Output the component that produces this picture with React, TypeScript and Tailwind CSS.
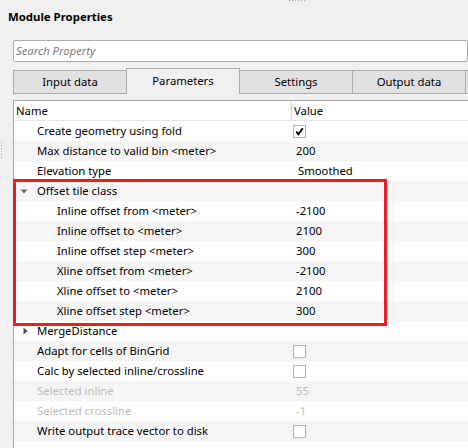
import React from "react";

type Row = {
  label: string;
  value?: string;
  level: 0 | 1;
  kind?: "text" | "check" | "checked" | "open" | "closed";
  disabled?: boolean;
  pad?: boolean;
};

const rows: Row[] = [
  { label: "Create geometry using fold", level: 0, kind: "checked" },
  { label: "Max distance to valid bin <meter>", value: "200", level: 0 },
  { label: "Elevation type", value: "Smoothed", level: 0, pad: true },
  { label: "Offset tile class", level: 0, kind: "open" },
  { label: "Inline offset from <meter>", value: "-2100", level: 1 },
  { label: "Inline offset to <meter>", value: "2100", level: 1 },
  { label: "Inline offset step <meter>", value: "300", level: 1 },
  { label: "Xline offset from <meter>", value: "-2100", level: 1 },
  { label: "Xline offset to <meter>", value: "2100", level: 1 },
  { label: "Xline offset step <meter>", value: "300", level: 1 },
  { label: "MergeDistance", level: 0, kind: "closed" },
  { label: "Adapt for cells of BinGrid", level: 0, kind: "check" },
  { label: "Calc by selected inline/crossline", level: 0, kind: "check" },
  { label: "Selected inline", value: "55", level: 0, disabled: true },
  { label: "Selected crossline", value: "-1", level: 0, disabled: true },
  { label: "Write output trace vector to disk", level: 0, kind: "check" },
];

const tabs = ["Input data", "Parameters", "Settings", "Output data", ""];

function CheckBox({ checked }: { checked?: boolean }) {
  return (
    <div className="flex h-[13px] w-[13px] items-center justify-center border border-[#b4b4b4] bg-white">
      {checked && (
        <svg width="11" height="11" viewBox="0 0 11 11">
          <path d="M2.2 5.6 L4.4 8.3 L8.8 2.2" fill="none" stroke="#000" strokeWidth="1.9" />
        </svg>
      )}
    </div>
  );
}

function PropRow({ row, index }: { row: Row; index: number }) {
  const kind = row.kind || "text";
  return (
    <div className={`flex h-[20px] items-center ${index % 2 === 1 ? "bg-[#f5f5f5]" : "bg-white"}`}>
      <div className="flex w-[278px] shrink-0 items-center">
        <div className={`flex shrink-0 items-center justify-center ${row.level === 1 ? "w-[43px]" : "w-[23px]"}`}>
          {kind === "open" && (
            <svg width="8" height="5" viewBox="0 0 8 5" className="mr-[3px]">
              <path d="M0.5 0.5 L7.5 0.5 L4 4.5 Z" fill="#6e6e6e" />
            </svg>
          )}
          {kind === "closed" && (
            <svg width="5" height="8" viewBox="0 0 5 8" className="mr-[1px]">
              <path d="M0.5 0.5 L4.5 4 L0.5 7.5 Z" fill="#4a4a4a" />
            </svg>
          )}
        </div>
        <span className={`whitespace-nowrap ${row.disabled ? "text-[#bdbdbd]" : "text-black"}`}>{row.label}</span>
      </div>
      <div className="flex items-center">
        {kind === "checked" && <div className="pl-[1px]"><CheckBox checked /></div>}
        {kind === "check" && <div className="pl-[1px]"><CheckBox /></div>}
        {row.value && (
          <span className={`${row.pad ? "pl-[6px]" : "pl-[4px]"} ${row.disabled ? "text-[#bdbdbd]" : "text-black"}`}>
            {row.value}
          </span>
        )}
      </div>
    </div>
  );
}

export default function App() {
  return (
    <div className="relative h-[448px] w-[468px] overflow-hidden bg-[#f0f0f0] font-['Noto_Sans',sans-serif] text-[11.3px] leading-[20px] text-black">
      {/* splitter grips */}
      <div className="absolute left-[289px] top-0 flex gap-[2px]">
        {[0, 1, 2, 3, 4, 5].map((i) => (
          <div key={i} className="h-px w-px bg-[#a8a8a8]" />
        ))}
      </div>
      <div className="absolute left-[1px] top-[142px] flex flex-col gap-[2px]">
        {[0, 1, 2, 3, 4, 5].map((i) => (
          <div key={i} className="h-px w-px bg-[#a8a8a8]" />
        ))}
      </div>

      <div className="h-[40px] px-2 pt-[9px]">
        <div className="text-[11.4px] font-bold leading-[16px]">Module Properties</div>
      </div>

      <div className="ml-[13px] flex h-[22px] items-center rounded-[2px] border border-[#acacac] bg-white pl-[2px]">
        <span className="italic text-[#7c7c7c]">Search Property</span>
      </div>

      <div className="mt-[6px] flex h-[25px] items-end pl-[13px]">
        {tabs.map((t, i) =>
          i === 1 ? (
            <div
              key={i}
              className="relative z-10 -mb-px -ml-px flex h-[26px] w-[114px] shrink-0 items-center justify-center border-x border-t border-[#acacac] bg-[#f0f0f0] pb-[1px]"
            >
              {t}
            </div>
          ) : (
            <div
              key={i}
              className={`flex h-[23px] w-[114px] shrink-0 items-center justify-center border-x border-t border-[#acacac] bg-[#e1e1e1] ${i > 0 ? "-ml-px" : ""}`}
            >
              {t}
            </div>
          )
        )}
      </div>

      <div className="ml-[13px] border-t border-[#acacac] pt-[6px]">
        <div className="border-l border-t border-[#a8a8a8] bg-white">
          <div className="flex h-[20px] items-center border-b border-[#e5e5e5] bg-white">
            <div className="w-[278px] shrink-0 border-r border-[#d8d8d8] pl-[2px]">Name</div>
            <div className="pl-[2px]">Value</div>
          </div>
          {rows.map((r, i) => (
            <PropRow key={i} row={r} index={i} />
          ))}
          <div className="h-[20px] bg-white" />
        </div>
      </div>

      {/* annotation */}
      <div className="pointer-events-none absolute left-[13px] top-[179px] h-[147px] w-[374px] border-[3px] border-[#ed1c24]" />
    </div>
  );
}
